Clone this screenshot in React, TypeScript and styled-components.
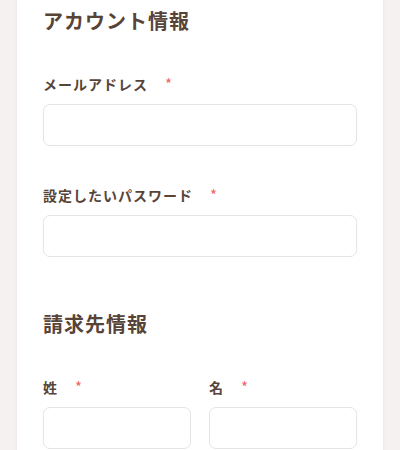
import React from "react";
import styled, { createGlobalStyle } from "styled-components";

const Global = createGlobalStyle`
  html, body { margin: 0; padding: 0; }
  body {
    background: #f5f1f0;
    font-family: "Noto Sans CJK JP", "Noto Sans", sans-serif;
    color: #574437;
  }
`;

const Card = styled.div`
  margin: 0 17px;
  background: #ffffff;
  box-shadow: 0 0 4px rgba(90, 70, 60, 0.06);
  padding: 7px 26px 20px;
  min-height: 450px;
  box-sizing: border-box;
`;

const Section = styled.section<{ $gap?: number }>`
  margin-top: ${(p) => p.$gap ?? 0}px;
`;

const Heading = styled.h2`
  margin: 0 0 39px;
  font-size: 20px;
  line-height: 28px;
  font-weight: 700;
  letter-spacing: 1px;
  color: #574437;
`;

const Stack = styled.div`
  display: flex;
  flex-direction: column;
  gap: 39px;
`;

const Field = styled.div`
  display: flex;
  flex-direction: column;
  gap: 10px;
  min-width: 0;
`;

const Row = styled.div`
  display: grid;
  grid-template-columns: 1fr 1fr;
  column-gap: 18px;
`;

const Label = styled.label`
  display: flex;
  align-items: center;
  font-size: 14px;
  line-height: 20px;
  font-weight: 700;
  letter-spacing: 1px;
  color: #574437;
`;

const Required = styled.span`
  margin-left: 17px;
  color: #ef6464;
  font-size: 15px;
  font-weight: 400;
  letter-spacing: 0;
`;

const Input = styled.input`
  display: block;
  box-sizing: border-box;
  width: 100%;
  height: 42px;
  border: 1px solid #e6e3e2;
  border-radius: 7px;
  background: #ffffff;
  padding: 0 12px;
  font-size: 14px;
  font-family: inherit;
  outline: none;
`;

function FormField({ label, type = "text" }: { label: string; type?: string }) {
  return (
    <Field>
      <Label>
        {label}
        <Required>*</Required>
      </Label>
      <Input type={type} />
    </Field>
  );
}

export default function App() {
  return (
    <>
      <Global />
      <Card>
        <Section>
          <Heading>アカウント情報</Heading>
          <Stack>
            <FormField label="メールアドレス" type="email" />
            <FormField label="設定したいパスワード" type="password" />
          </Stack>
        </Section>
        <Section $gap={53}>
          <Heading>請求先情報</Heading>
          <Row>
            <FormField label="姓" />
            <FormField label="名" />
          </Row>
        </Section>
      </Card>
    </>
  );
}
